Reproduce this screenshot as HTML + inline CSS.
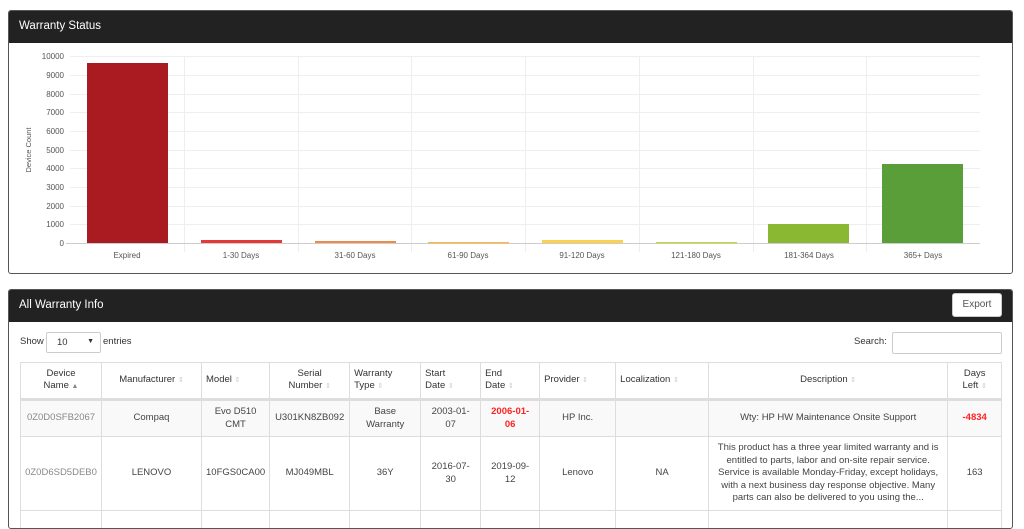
<!DOCTYPE html>
<html><head><meta charset="utf-8"><style>
*{box-sizing:border-box;margin:0;padding:0}
body{width:1024px;height:518px;background:#fff;font-family:"Liberation Sans",sans-serif;overflow:hidden;position:relative;color:#333}
.panel{position:absolute;left:8px;width:1005px;border:1px solid #555;border-radius:3px;background:#fff;overflow:hidden}
.hd{background:#222;color:#fff;height:32px;font-size:11.5px;padding:9px 10px;position:relative;z-index:2}
table{border-collapse:collapse;position:absolute;left:11px;top:72px;font-size:9.5px;color:#444;table-layout:fixed}
td,th{border:1px solid #ddd;text-align:center;vertical-align:middle;padding:2px 4px;line-height:12.5px}
th{font-weight:normal;color:#333;height:37px;border-bottom:3px solid #ddd}
th.l{text-align:left}
.s{color:#ccc;font-size:7px}
.r{color:#f22;font-weight:bold}
</style></head><body>
<div class="panel" style="top:10px;height:264px">
<div class="hd">Warranty Status</div>
<svg width="1005" height="240" style="position:absolute;left:-9px;top:21px" font-family="Liberation Sans" font-size="8" fill="#555">
<g stroke="#eee" stroke-width="1">
<line x1="70" x2="980" y1="24.5" y2="24.5"/><line x1="70" x2="980" y1="43.5" y2="43.5"/><line x1="70" x2="980" y1="62.5" y2="62.5"/><line x1="70" x2="980" y1="80.5" y2="80.5"/><line x1="70" x2="980" y1="99.5" y2="99.5"/><line x1="70" x2="980" y1="118.5" y2="118.5"/><line x1="70" x2="980" y1="136.5" y2="136.5"/><line x1="70" x2="980" y1="155.5" y2="155.5"/><line x1="70" x2="980" y1="174.5" y2="174.5"/><line x1="70" x2="980" y1="192.5" y2="192.5"/>
<line x1="184.5" x2="184.5" y1="24" y2="220"/><line x1="298.5" x2="298.5" y1="24" y2="220"/><line x1="411.5" x2="411.5" y1="24" y2="220"/><line x1="525.5" x2="525.5" y1="24" y2="220"/><line x1="639.5" x2="639.5" y1="24" y2="220"/><line x1="753.5" x2="753.5" y1="24" y2="220"/><line x1="866.5" x2="866.5" y1="24" y2="220"/>
</g>
<line x1="66" x2="980" y1="211.5" y2="211.5" stroke="#ccc"/>
<g text-anchor="end">
<text x="64" y="27">10000</text><text x="64" y="46">9000</text><text x="64" y="65">8000</text><text x="64" y="83">7000</text><text x="64" y="102">6000</text><text x="64" y="121">5000</text><text x="64" y="139">4000</text><text x="64" y="158">3000</text><text x="64" y="177">2000</text><text x="64" y="195">1000</text><text x="64" y="214">0</text>
</g>
<text transform="translate(31,118) rotate(-90)" text-anchor="middle" font-size="7.5">Device Count</text>
<rect x="87" y="31" width="81" height="180" fill="#a91b20"/>
<rect x="201" y="208" width="81" height="3" fill="#e53935"/>
<rect x="315" y="209" width="81" height="2" fill="#ef8a4a"/>
<rect x="428" y="210" width="81" height="1.5" fill="#f6b85a"/>
<rect x="542" y="208" width="81" height="3" fill="#fdd04e"/>
<rect x="656" y="210" width="81" height="1.5" fill="#c5d35a"/>
<rect x="768" y="192" width="81" height="19" fill="#8ab833"/>
<rect x="882" y="132" width="81" height="79" fill="#5a9e3a"/>
<g text-anchor="middle">
<text x="127" y="226">Expired</text><text x="241" y="226">1-30 Days</text><text x="355" y="226">31-60 Days</text><text x="468" y="226">61-90 Days</text><text x="582" y="226">91-120 Days</text><text x="696" y="226">121-180 Days</text><text x="809" y="226">181-364 Days</text><text x="923" y="226">365+ Days</text>
</g>
</svg>
</div>
<div class="panel" style="top:289px;height:240px">
<div class="hd">All Warranty Info</div>
<div style="position:absolute;z-index:3;left:943px;top:3px;width:50px;height:24px;background:#fff;border:1px solid #ccc;border-radius:3px;font-size:10px;color:#555;text-align:center;line-height:22px">Export</div>
<div style="position:absolute;left:11px;top:46px;font-size:9.5px">Show</div>
<div style="position:absolute;left:37px;top:42px;width:55px;height:21px;border:1px solid #ccc;border-radius:2px;font-size:9.5px;padding:4px 10px">10<span style="position:absolute;right:6px;font-size:7px;top:5px">▼</span></div>
<div style="position:absolute;left:94px;top:46px;font-size:9.5px">entries</div>
<div style="position:absolute;left:845px;top:46px;font-size:9.5px">Search:</div>
<div style="position:absolute;left:883px;top:42px;width:110px;height:22px;border:1px solid #ccc;border-radius:2px"></div>
<table>
<colgroup><col style="width:81px"><col style="width:100px"><col style="width:68px"><col style="width:80px"><col style="width:71px"><col style="width:60px"><col style="width:59px"><col style="width:76px"><col style="width:93px"><col style="width:239px"><col style="width:54px"></colgroup>
<tr><th>Device<br>Name <span class="s" style="color:#888">▲</span></th><th>Manufacturer <span class="s">⇕</span></th><th class="l">Model <span class="s">⇕</span></th><th>Serial<br>Number <span class="s">⇕</span></th><th class="l">Warranty<br>Type <span class="s">⇕</span></th><th class="l">Start<br>Date <span class="s">⇕</span></th><th class="l">End<br>Date <span class="s">⇕</span></th><th class="l">Provider <span class="s">⇕</span></th><th class="l">Localization <span class="s">⇕</span></th><th>Description <span class="s">⇕</span></th><th>Days<br>Left <span class="s">⇕</span></th></tr>
<tr style="background:#f9f9f9;height:37px"><td style="color:#888">0Z0D0SFB2067</td><td>Compaq</td><td>Evo D510<br>CMT</td><td>U301KN8ZB092</td><td>Base<br>Warranty</td><td>2003-01-<br>07</td><td class="r">2006-01-<br>06</td><td>HP Inc.</td><td></td><td>Wty: HP HW Maintenance Onsite Support</td><td class="r">-4834</td></tr>
<tr style="height:74px"><td style="color:#888">0Z0D6SD5DEB0</td><td>LENOVO</td><td>10FGS0CA00</td><td>MJ049MBL</td><td>36Y</td><td>2016-07-<br>30</td><td>2019-09-<br>12</td><td>Lenovo</td><td>NA</td><td>This product has a three year limited warranty and is entitled to parts, labor and on-site repair service. Service is available Monday-Friday, except holidays, with a next business day response objective. Many parts can also be delivered to you using the...</td><td>163</td></tr>
<tr style="height:30px"><td></td><td></td><td></td><td></td><td></td><td></td><td></td><td></td><td></td><td></td><td></td></tr>
</table>
</div>
</body></html>
